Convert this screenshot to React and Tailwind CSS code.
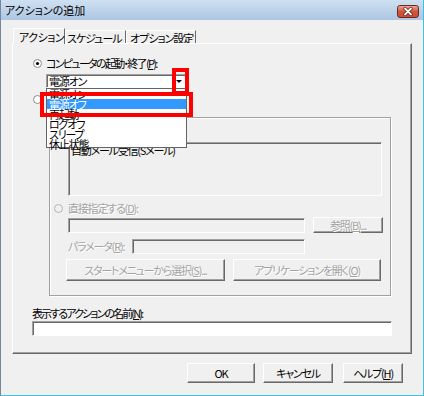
import React from "react";

const raised =
  "border border-t-white border-l-white border-r-[#696969] border-b-[#696969] shadow-[inset_-1px_-1px_0_#a0a0a0]";
const sunken =
  "border border-t-[#a0a0a0] border-l-[#a0a0a0] border-r-white border-b-white shadow-[inset_1px_1px_0_#696969]";
const dis = "text-[#a3a3a3] [text-shadow:1px_1px_0_#ffffff]";

function Radio({ checked, disabled }) {
  return (
    <svg width="9" height="9" viewBox="0 0 9 9" className="shrink-0">
      <circle cx="4.5" cy="4.5" r="4" fill={disabled ? "#f0f0f0" : "#ffffff"} stroke={disabled ? "#b5b5b5" : "#8a8a8a"} strokeWidth="1" />
      {checked && <circle cx="4.5" cy="4.5" r="1.6" fill="#000000" />}
    </svg>
  );
}

function U({ children }) {
  return <span className="underline underline-offset-[1px]">{children}</span>;
}

export default function App() {
  return (
    <div className="relative w-[424px] h-[396px] overflow-hidden whitespace-nowrap bg-[#f0f0f0] border-l border-l-[#76879a] border-r border-r-[#3fc0ec] border-b border-b-[#3fc0ec] flex flex-col font-['Noto_Sans_CJK_JP',sans-serif] [font-feature-settings:'palt'] text-[11px] leading-[12px] tracking-[-1.2px] text-black">
      {/* title bar */}
      <div className="h-[20px] shrink-0 bg-linear-to-b from-[#cfe0f2] to-[#adc6e2] flex justify-between items-start pl-[4px] pr-[4px]">
        <span className="pt-[4px] text-[11px] tracking-normal">アクションの追加</span>
        <div className="mt-[5px] w-[22px] h-[13px] rounded-[3px] border border-[#6b2a1f] bg-linear-to-b from-[#eaa795] via-[#cf5439] to-[#cc4e35] flex items-center justify-center">
          <svg width="12" height="9" viewBox="0 0 12 9">
            <path d="M3 1.5 L9 7.5 M9 1.5 L3 7.5" stroke="#5a1a10" strokeWidth="3.2" strokeLinecap="round" />
            <path d="M3 1.5 L9 7.5 M9 1.5 L3 7.5" stroke="#ffffff" strokeWidth="1.8" strokeLinecap="round" />
          </svg>
        </div>
      </div>

      <div className="pt-[8px] pl-[11px] flex flex-col">
        {/* tabs */}
        <div className="flex items-end h-[15px] pl-[1px] tracking-[-1px]">
          <div className="relative z-10 -mb-px w-[52px] h-[16px] bg-[#f0f0f0] border-t border-l border-white border-r border-r-[#696969] pl-[5px] pt-[2px] tracking-[-0.5px]">
            アクション
          </div>
          <div className="w-[61px] h-[13px] border-t border-l border-white border-r border-r-[#696969] pl-[1px] pt-[1px]">
            スケジュール
          </div>
          <div className="w-[70px] h-[13px] border-t border-l border-white border-r border-r-[#696969] pl-[3px] pt-[1px]">
            オプション設定
          </div>
        </div>

        {/* panel */}
        <div className="w-[400px] h-[311px] border border-t-white border-l-white border-r-[#696969] border-b-[#696969] shadow-[inset_-1px_-1px_0_#a0a0a0] flex flex-col">
          <div className="mt-[13px] pl-[20px] h-[12px] flex items-center gap-[4px]">
            <Radio checked />
            <span className="tracking-[-1.7px]">
              コンピュータの起動・終了(<U>P</U>):
            </span>
          </div>

          <div className={`mt-[5px] ml-[33px] w-[141px] h-[14px] bg-white ${sunken} flex items-center justify-between pl-[2px] pr-[1px]`}>
            <span className="leading-[10px]">電源オン</span>
            <div className="w-[12px] h-[10px] flex items-center justify-center">
              <svg width="6" height="3" viewBox="0 0 6 3">
                <path d="M0 0 H6 L3 3 Z" fill="#000" />
              </svg>
            </div>
          </div>

          <div className="mt-[5px] pl-[20px] h-[12px] flex items-center">
            <Radio />
          </div>

          {/* group box */}
          <div className="mt-[12px] ml-[36px] w-[342px] h-[179px] border border-[#a0a0a0] shadow-[inset_1px_1px_0_#ffffff,1px_1px_0_#ffffff] flex flex-col">
            <div className={`mt-[24px] ml-[18px] w-[314px] h-[54px] ${sunken} pl-[2px] pt-[1px]`}>
              自動メール受信(Sメール)
            </div>

            <div className="mt-[6px] pl-[4px] h-[12px] flex items-center gap-[5px]">
              <Radio disabled />
              <span className={dis}>
                直接指定する(<U>D</U>):
              </span>
            </div>

            <div className="mt-[3px] ml-[18px] h-[16px] flex items-start gap-[8px]">
              <div className={`mt-[1px] w-[237px] h-[15px] ${sunken}`} />
              <div className={`w-[70px] h-[16px] ${raised} flex items-center justify-center ${dis}`}>
                <span>
                  参照(<U>B</U>)...
                </span>
              </div>
            </div>

            <div className="mt-[5px] ml-[18px] h-[16px] flex items-center">
              <span className={`w-[64px] ${dis}`}>
                パラメータ(<U>R</U>):
              </span>
              <div className={`w-[173px] h-[15px] ${sunken}`} />
            </div>

            <div className="mt-[5px] ml-[16px] flex gap-[8px]">
              <div className={`w-[159px] h-[22px] ${raised} flex items-center justify-center ${dis}`}>
                <span>
                  スタートメニューから選択(<U>S</U>)...
                </span>
              </div>
              <div className={`w-[148px] h-[22px] ${raised} flex items-center justify-center ${dis}`}>
                <span>
                  アプリケーションを開く(<U>O</U>)
                </span>
              </div>
            </div>
          </div>

          <div className="mt-[11px] ml-[19px] h-[12px] tracking-[-1.9px]">
            表示するアクションの名前(<U>N</U>):
          </div>
          <div className={`mt-[2px] ml-[19px] w-[360px] h-[15px] bg-white ${sunken}`} />
        </div>

        {/* bottom buttons */}
        <div className="mt-[9px] ml-[175px] flex">
          <div className={`w-[68px] h-[20px] ${raised} flex items-center justify-center`}>OK</div>
          <div className={`ml-[8px] w-[70px] h-[20px] ${raised} flex items-center justify-center`}>キャンセル</div>
          <div className={`ml-[10px] w-[60px] h-[20px] ${raised} flex items-center justify-center`}>
            <span>
              ヘルプ(<U>H</U>)
            </span>
          </div>
        </div>
      </div>

      {/* open dropdown list (overlay) */}
      <div className="absolute left-[45px] top-[88px] w-[141px] h-[60px] bg-white border border-[#646464] flex flex-col text-[11px] leading-[10px]">
        <div className="h-[10px] pl-[2px]">電源オン</div>
        <div className="h-[10px] pl-[2px] bg-[#3399ff] text-white">電源オフ</div>
        <div className="h-[10px] pl-[2px]">再起動</div>
        <div className="h-[10px] pl-[2px]">ログオフ</div>
        <div className="h-[10px] pl-[2px]">スリープ</div>
        <div className="h-[8px] pl-[2px]">休止状態</div>
      </div>

      {/* red highlight boxes (annotation overlay) */}
      <div className="absolute left-[171px] top-[68px] w-[17px] h-[27px] border-4 border-[#ff0000]" />
      <div className="absolute left-[39px] top-[92px] w-[153px] h-[25px] border-4 border-[#ff0000]" />
    </div>
  );
}
